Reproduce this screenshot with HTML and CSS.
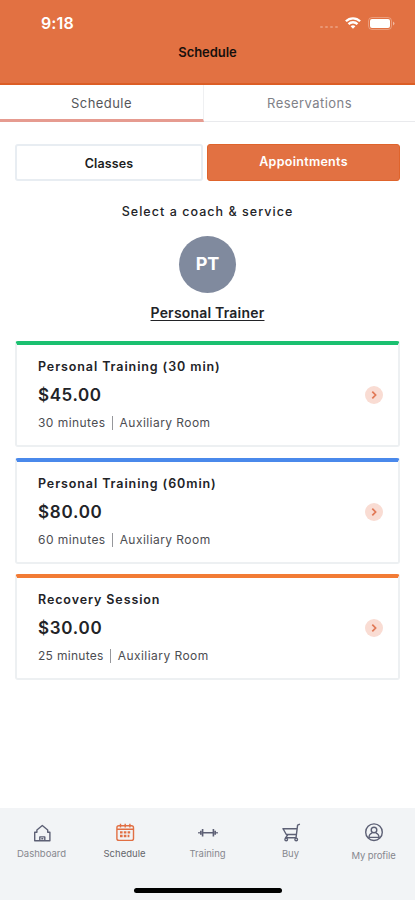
FILE: index.html
```html
<!DOCTYPE html>
<html lang="en">
<head>
<meta charset="utf-8">
<title>Schedule</title>
<link rel="stylesheet" href="styles.css">
</head>
<body>
<div class="app">
  <header class="header">
    <div class="status">
      <span class="time">9:18</span>
      <div class="indicators">
        <span class="signal"><i></i><i></i><i></i><i></i></span>
        <svg class="wifi" width="16" height="12" viewBox="0 0 16 12" fill="none" stroke="#fff" stroke-width="2.3"><path d="M.9 4.3C4.8.3 11.2.3 15.1 4.3M3.5 7.1c2.5-2.5 6.5-2.5 9 0"/><path d="M5.6 9.2c1.4-1.3 3.4-1.3 4.8 0L8 11.8z" fill="#fff" stroke="none"/></svg>
        <svg class="battery" width="27" height="13" viewBox="0 0 27 13"><rect x=".5" y=".5" width="23" height="12" rx="3.5" fill="none" stroke="#fff" stroke-opacity=".3"/><rect x="2" y="2" width="20" height="9" rx="2" fill="#fff"/><path d="M25 4.5q3 2 0 4z" fill="#fff" fill-opacity=".5"/></svg>
      </div>
    </div>
    <h1 class="title">Schedule</h1>
  </header>
  <nav class="tabs">
    <a class="tab active">Schedule</a>
    <a class="tab">Reservations</a>
  </nav>
  <main class="content">
    <div class="segments">
      <button class="segment classes">Classes</button>
      <button class="segment selected">Appointments</button>
    </div>
    <p class="prompt">Select a coach &amp; service</p>
    <div class="avatar">PT</div>
    <div class="coach"><a class="coach-name">Personal Trainer</a></div>
    <div class="services">
      <article class="card green">
        <div class="info"><h2 class="name">Personal Training (30 min)</h2><p class="price">$45.00</p><p class="meta"><span class="duration">30 minutes</span><i class="rule"></i><span>Auxiliary Room</span></p></div>
        <svg class="go" width="18" height="18" viewBox="0 0 18 18"><circle cx="9" cy="9" r="9"/><path d="M7.3 5.7 10.6 9l-3.3 3.3"/></svg>
      </article>
      <article class="card blue">
        <div class="info"><h2 class="name">Personal Training (60min)</h2><p class="price wide">$80.00</p><p class="meta"><span class="duration">60 minutes</span><i class="rule"></i><span>Auxiliary Room</span></p></div>
        <svg class="go" width="18" height="18" viewBox="0 0 18 18"><circle cx="9" cy="9" r="9"/><path d="M7.3 5.7 10.6 9l-3.3 3.3"/></svg>
      </article>
      <article class="card orange">
        <div class="info"><h2 class="name">Recovery Session</h2><p class="price wide">$30.00</p><p class="meta"><span class="duration short">25 minutes</span><i class="rule"></i><span>Auxiliary Room</span></p></div>
        <svg class="go" width="18" height="18" viewBox="0 0 18 18"><circle cx="9" cy="9" r="9"/><path d="M7.3 5.7 10.6 9l-3.3 3.3"/></svg>
      </article>
    </div>
  </main>
  <footer class="bottom">
    <nav class="menu">
      <a class="item"><svg class="icon" width="20" height="20" viewBox="0 0 20 20"><path d="M2.7 17.7V9.2h2.2V7L10.3 2.5 15.7 7v2.2h2.2v8.5zM7.8 17.5v-3.6h5v3.6M9.3 15.7h2"/></svg><span>Dashboard</span></a>
      <a class="item current"><svg class="icon" width="20" height="20" viewBox="0 0 20 20"><rect x="1.9" y="2.8" width="16.6" height="14.6" rx="2"/><path d="M2 6.2h16M5.5 .7v3.7M10.2.7v3.7M14.9.7v3.7"/><path d="M5 9.4h11M5 13h9.4" stroke-width="2.3" stroke-dasharray="2.6 1.2"/></svg><span>Schedule</span></a>
      <a class="item"><svg class="icon dumbbell" width="20" height="20" viewBox="0 0 20 20"><path d="M4 9.8h12M4.6 6v7.6M2.8 7.8v4M1 9v1.6M15.4 6v7.6M17.2 7.8v4M19 9v1.6"/></svg><span>Training</span></a>
      <a class="item"><svg class="icon" width="20" height="20" viewBox="0 0 20 20"><path d="M18.9 1.2 16.6 2.2 15 14.8H4.5L7 11.5M1.4 5.7h14.4M2.2 6l3.1 5.5h10M6.5 11.5l-1.4 4"/><circle cx="5.2" cy="16.4" r="1.3"/><circle cx="15.2" cy="16.4" r="1.3"/></svg><span>Buy</span></a>
      <a class="item profile"><svg class="icon" width="20" height="20" viewBox="0 0 20 20"><circle cx="10" cy="9.2" r="8.3"/><circle cx="10" cy="7" r="2.8"/><path d="M4.8 15.2c.2-3.5 1.8-4.8 3.5-5.1M15.2 15.2c-.2-3.5-1.8-4.8-3.5-5.1M5 14.4h10"/></svg><span>My profile</span></a>
    </nav>
    <div class="home"></div>
  </footer>
</div>
</body>
</html>
```
FILE: styles.css
```css
* { box-sizing: border-box; }
body { margin: 0; font-family: Inter, "Liberation Sans", sans-serif; color: #222327; background: #fff; }
h1, h2, p { margin: 0; }
.app { width: 415px; height: 900px; display: flex; flex-direction: column; overflow: hidden; }
.header { height: 85px; background: #e27142; border-bottom: 2px solid #dc5e25; }
.status { height: 44px; padding: 2px 20px 0 41px; display: flex; align-items: center; justify-content: space-between; color: #fff; }
.time { font-size: 16px; font-weight: 600; line-height: 20px; letter-spacing: .1px; }
.indicators { display: flex; align-items: center; }
.signal { display: flex; gap: 2px; margin: 7px 7px 0 0; }
.signal i { width: 3px; height: 2px; border-radius: 1px; background: rgba(255,255,255,.27); }
.wifi { margin-right: 7px; }
.title { font-size: 13px; line-height: 16px; font-weight: 600; text-align: center; letter-spacing: -.05px; color: #17100d; }
.tabs { height: 37px; display: flex; border-bottom: 1px solid #e9eaed; }
.tab { flex: 1; height: 37px; line-height: 36px; text-align: center; font-size: 13px; color: #7f8188; letter-spacing: .45px; }
.tab.active { flex: 0 0 204px; color: #55565a; border-right: 1px solid #eff0f2; border-bottom: 3px solid #e69b90; }
.content { flex: 1; padding: 22px 15px 0; }
.segments { display: flex; gap: 4px; height: 37px; }
.segment { font: 600 12.5px/30px Inter, sans-serif; letter-spacing: .15px; border: 2px solid #e8edf2; border-radius: 3px; background: #fff; color: #1c1d20; padding: 2px 0 0; }
.classes { width: 188px; }
.selected { width: 193px; padding: 0 0 1px; letter-spacing: .3px; color: #fff; background: #e27142; border: 1px solid #df642c; }
.prompt { margin-top: 22px; text-align: center; font-size: 12.5px; line-height: 18px; font-weight: 500; letter-spacing: 1.04px; }
.avatar { width: 57px; height: 57px; margin: 15px auto 0; border-radius: 50%; background: #808a9e; color: #fff; text-align: center; line-height: 56px; font-size: 18px; font-weight: 700; }
.coach { margin-top: 10px; text-align: center; font-size: 14px; line-height: 20px; font-weight: 600; }
.coach-name { letter-spacing: .2px; text-decoration: underline; text-underline-offset: 2px; text-decoration-thickness: 1px; }
.services { margin-top: 18px; display: flex; flex-direction: column; gap: 10.5px; }
.card { height: 106px; padding: 14px 15px 0 21px; display: flex; justify-content: space-between; border: 2px solid #edf0f2; border-top: 4px solid; border-radius: 3px; }
.green { border-top-color: #1bc070; }
.blue { border-top-color: #4a89eb; }
.orange { border-top-color: #f27b35; }
.name { font-size: 12.5px; line-height: 16px; font-weight: 600; letter-spacing: .9px; }
.price { margin-top: 9px; font-size: 17px; line-height: 22px; font-weight: 600; letter-spacing: .6px; }
.wide { letter-spacing: .75px; }
.meta { margin-top: 9px; display: flex; align-items: center; font-size: 12px; line-height: 16px; letter-spacing: .45px; color: #4c4d52; }
.rule { width: 1px; height: 14px; margin: 0 7px 0 6px; background: #96979b; }
.short { letter-spacing: .3px; }
.go { margin-top: 27px; flex: none; fill: #f9dcd3; }
.go path { fill: none; stroke: #e17855; stroke-width: 1.7; }
.bottom { height: 92px; background: #f2f4f6; }
.menu { height: 80px; display: flex; padding-top: 15px; }
.item { width: 83px; display: flex; flex-direction: column; align-items: center; font-size: 9.5px; line-height: 14px; color: #86878e; }
.item span { margin-top: 4px; }
.current { color: #65666c; }
.item.profile span { margin-top: 6px; letter-spacing: -.1px; }
.icon { fill: none; stroke: #5d6075; stroke-width: 1.4; stroke-linejoin: round; }
.dumbbell { stroke-width: 1.6; }
.current .icon { stroke: #e16f43; }
.home { width: 148px; height: 5px; margin: 0 auto; border-radius: 3px; background: #000; }
```
